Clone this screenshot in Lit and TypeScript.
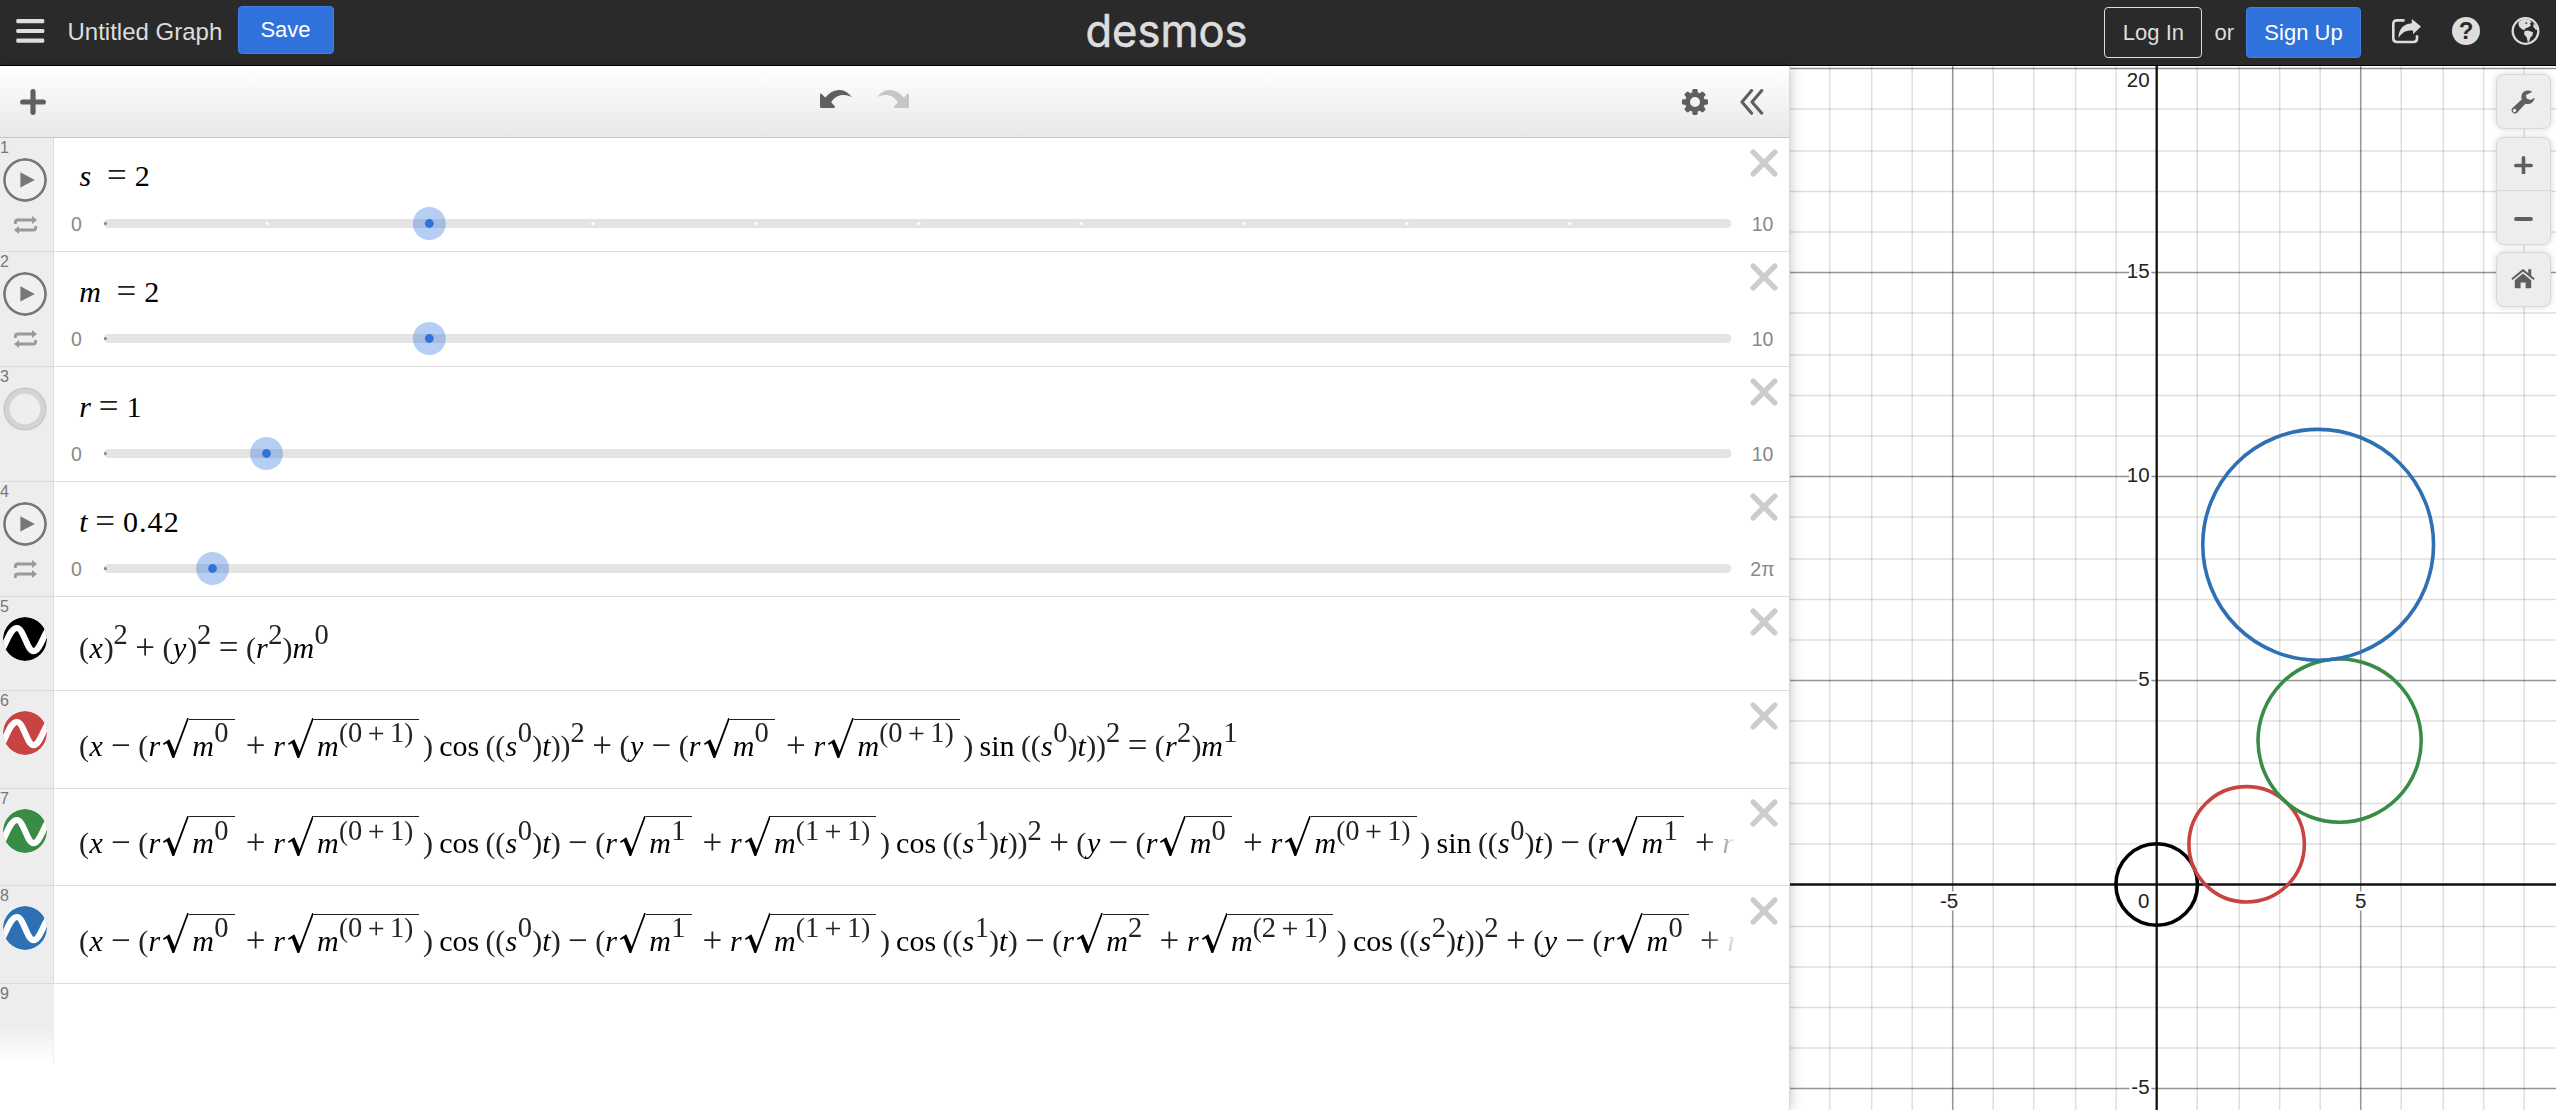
import { LitElement, html, svg, css, nothing, TemplateResult } from "lit";
import { customElement, property } from "lit/decorators.js";
import { classMap } from "lit/directives/class-map.js";

/* ---------- math typesetting ---------- */

// Grammar: letters, digits, operators, cos/sin, ^{...} for exponents, #{...} for square roots.
function readGroup(src: string, open: number): [string, number] {
  let depth = 0;
  for (let i = open; i < src.length; i++) {
    if (src[i] === "{") depth++;
    if (src[i] === "}" && --depth === 0) return [src.slice(open + 1, i), i + 1];
  }
  return [src.slice(open + 1), src.length];
}

function typeset(src: string): TemplateResult[] {
  const out: TemplateResult[] = [];
  let i = 0;
  while (i < src.length) {
    const ch = src[i];
    if (ch === "^" || ch === "#") {
      const [body, next] = readGroup(src, i + 1);
      out.push(
        ch === "^"
          ? html`<span class="sup">${typeset(body)}</span>`
          : html`<span class="root"><svg class="radical" viewBox="0 0 25.5 40"><path d="M0 25.4 L6.3 21.2 L11.6 33.6 L24.2 0 H25.5 V1.6 L11.2 40 H9.4 L3.9 25.2 L.7 27Z"/></svg><span class="radicand">${typeset(body)}</span></span>`
      );
      i = next;
      continue;
    }
    const fn = src.slice(i, i + 3);
    if (fn === "cos" || fn === "sin") {
      out.push(html`<span class="fn">${fn}</span>`);
      i += 3;
      continue;
    }
    if (/[a-z]/.test(ch)) out.push(html`<span class="t v v-${ch}">${ch}</span>`);
    else if (/[0-9]/.test(ch)) out.push(html`<span class="t d">${ch}</span>`);
    else if (ch === ".") out.push(html`<span class="t dot">.</span>`);
    else if (ch === "(" || ch === ")") out.push(html`<span class="t p">${ch}</span>`);
    else if (ch === "~") out.push(html`<span class="t ital"></span>`);
    else out.push(html`<span class="t o">${ch}</span>`);
    i++;
  }
  return out;
}

@customElement("math-line")
class MathLine extends LitElement {
  @property() src = "";
  static styles = css`
    :host { display: block; font: 30px/30px "Liberation Serif", "Times New Roman", serif; color: #000; white-space: nowrap; }
    .line { display: block; font-size: 30px; }
    .t { display: inline-block; text-align: center; line-height: 30px; }
    .v { font-style: italic; }
    .v-x, .v-y { width: 14.9px; }
    .v-r { width: 12.4px; }
    .v-m { width: 22px; }
    .v-s { width: 12.6px; }
    .v-t { width: 8.9px; }
    .p { width: 9.8px; color: #222; }
    .d { width: 16.2px; }
    .dot { width: 8.2px; }
    .ital { width: 8px; }
    .o { width: 34.6px; font-size: 35px; line-height: 0; color: #222; vertical-align: -1px; }
    .fn { padding: 0 6.4px; }
    .sup { font-size: 28.5px; line-height: 0; vertical-align: 13.4px; color: #222; }
    .sup .t { line-height: 0; }
    .sup .d { width: 14.4px; }
    .sup .p { width: 9px; font-size: 27px; }
    .sup .o { width: 27.6px; font-size: 30px; }
    .root { display: inline-block; margin: 0 3.5px 0 2.7px; }
    .radical { display: inline-block; width: 25.5px; height: 40px; vertical-align: -2.5px; }
    .radicand { display: inline-block; border-top: 1.5px solid #222; padding: 11px 6.2px 0 3.5px; }
  `;
  render() {
    return html`<span class="line">${typeset(this.src)}</span>`;
  }
}

/* ---------- expression rows ---------- */

interface Row {
  kind: "slider" | "plot" | "blank";
  src?: string;
  pos?: number;
  ticks?: boolean;
  max?: string;
  mode?: "play" | "idle";
  loop?: "both" | "forward";
  color?: string;
  short?: boolean;
}

const rows: Row[] = [
  { kind: "slider", src: "s~=2", pos: 0.2, ticks: true, max: "10", mode: "play", loop: "both" },
  { kind: "slider", src: "m~=2", pos: 0.2, max: "10", mode: "play", loop: "both" },
  { kind: "slider", src: "r=1", pos: 0.1, max: "10", mode: "idle" },
  { kind: "slider", src: "t=0.42", pos: 0.42 / (2 * Math.PI), max: "2π", mode: "play", loop: "forward" },
  { kind: "plot", src: "(x)^{2}+(y)^{2}=(r^{2})m^{0}", color: "#000000", short: true },
  {
    kind: "plot",
    src: "(x−(r#{m^{0}}+r#{m^{(0+1)}})cos((s^{0})t))^{2}+(y−(r#{m^{0}}+r#{m^{(0+1)}})sin((s^{0})t))^{2}=(r^{2})m^{1}",
    color: "#c74440",
  },
  {
    kind: "plot",
    src: "(x−(r#{m^{0}}+r#{m^{(0+1)}})cos((s^{0})t)−(r#{m^{1}}+r#{m^{(1+1)}})cos((s^{1})t))^{2}+(y−(r#{m^{0}}+r#{m^{(0+1)}})sin((s^{0})t)−(r#{m^{1}}+r",
    color: "#388c46",
  },
  {
    kind: "plot",
    src: "(x−(r#{m^{0}}+r#{m^{(0+1)}})cos((s^{0})t)−(r#{m^{1}}+r#{m^{(1+1)}})cos((s^{1})t)−(r#{m^{2}}+r#{m^{(2+1)}})cos((s^{2})t))^{2}+(y−(r#{m^{0}}+r",
    color: "#2d70b3",
  },
  { kind: "blank" },
];

@customElement("expression-row")
class ExpressionRow extends LitElement {
  @property({ attribute: false }) row!: Row;
  @property({ type: Number }) index = 0;
  static styles = css`
    :host { display: block; }
    .row { display: flex; box-sizing: border-box; width: 1789px; font-family: "Liberation Sans", Arial, sans-serif; border-bottom: 1px solid #dcdcdc; }
    .slider { height: 115px; }
    .first { height: 114px; }
    .plot { height: 97.5px; }
    .short { height: 94px; }
    .blank { height: 80px; border-bottom: 0; }
    .gutter { flex: none; box-sizing: border-box; width: 54px; background: #ededed; border-right: 1px solid #dcdcdc; display: flex; flex-direction: column; align-items: flex-start; color: #777; }
    .blank .gutter { background: linear-gradient(#ededed 50%, #fff); border-right-color: #eee; }
    .num { font-size: 16px; line-height: 18px; height: 20px; padding-top: 1px; box-sizing: border-box; }
    .badge { display: block; width: 44px; height: 44px; margin-left: 3px; border-radius: 50%; overflow: hidden; }
    .loop { display: block; width: 23px; height: 18px; margin: 14px 0 0 14px; }
    .body { flex: 1; min-width: 0; display: flex; flex-direction: column; }
    .clip { width: 1682px; box-sizing: border-box; padding-left: 25px; overflow: hidden; }
    .plot .clip { padding-top: 27px; padding-bottom: 10px; -webkit-mask-image: linear-gradient(90deg, #000 1650px, transparent 1682px); mask-image: linear-gradient(90deg, #000 1650px, transparent 1682px); }
    .plot.short .clip { padding-top: 35.5px; }
    .slider .clip { padding-top: 24.5px; padding-bottom: 15px; }
    .first .clip { padding-top: 23px; padding-bottom: 15.5px; }
    .track-row { display: flex; align-items: center; height: 33px; color: #888; font-size: 19.5px; line-height: 22px; }
    .min { flex: none; box-sizing: border-box; width: 49px; padding-left: 17px; padding-top: 2.5px; }
    .max { flex: none; box-sizing: border-box; width: 57px; text-align: center; padding: 2.5px 0 0 4px; }
    .track { display: block; width: 1629px; height: 33px; flex: none; }
    .del { flex: none; width: 28px; height: 28px; margin: 10.5px 11px 0 -39px; }
  `;

  private badge(r: Row) {
    if (r.kind === "blank") return nothing;
    if (r.mode === "play")
      return html`<svg class="badge" viewBox="0 0 44 44"><circle cx="22" cy="22" r="20.6" fill="#f0f0f0" stroke="#777" stroke-width="2.7"/><path d="M17.4 14.3 L31.8 22 L17.4 29.6Z" fill="#777"/></svg>`;
    if (r.mode === "idle")
      return html`<svg class="badge" viewBox="0 0 44 44"><circle cx="22" cy="22" r="21.6" fill="#c6c6c6"/><circle cx="22" cy="22" r="20.2" fill="#d4d4d4"/><circle cx="22" cy="22" r="15.3" fill="#eee"/></svg>`;
    return html`<svg class="badge" viewBox="0 0 44 44"><circle cx="22" cy="22" r="22" fill=${r.color}/><path d="M-1 33 C5 22 8 11 14 11 C20.5 11 24 34.2 30.5 34.2 C36 34.2 39 22 45 12.5" fill="none" stroke="#fff" stroke-width="6.2"/></svg>`;
  }

  private loopIcon(kind?: string) {
    if (!kind) return nothing;
    return html`<svg class="loop" viewBox="0 0 23 18" fill="none" stroke="#999" stroke-width="2.8">
      <path d="M1.4 8 V6 Q1.4 4 3.6 4 H19"/><path d="M18 0 L23 4 L18 8Z" fill="#999" stroke="none"/>
      ${kind === "both"
        ? svg`<path d="M21.6 10 V12 Q21.6 14 19.4 14 H4"/><path d="M5 10 L0 14 L5 18Z" fill="#999" stroke="none"/>`
        : svg`<path d="M1.4 18 V16 Q1.4 14 3.6 14 H19"/><path d="M18 10 L23 14 L18 18Z" fill="#999" stroke="none"/>`}
    </svg>`;
  }

  private track(r: Row) {
    const cx = 0.7 + 1628 * (r.pos ?? 0);
    const ticks = r.ticks ? [1, 3, 4, 5, 6, 7, 8, 9] : [];
    return html`<div class="track-row">
      <div class="min">0</div>
      <svg class="track" viewBox="0 0 1629 33">
        <rect x="1" y="12" width="1627.5" height="9" rx="4.5" fill="#e4e4e4"/>
        <circle cx="2.4" cy="16.5" r="1.6" fill="#888"/>
        ${ticks.map((k) => svg`<circle cx=${1.5 + 162.8 * k} cy="16.5" r="1.6" fill="#fff"/>`)}
        <circle cx=${cx} cy="16.5" r="16.5" fill="#2f72dc" fill-opacity=".35"/>
        <circle cx=${cx} cy="16.5" r="4.4" fill="#2f72dc"/>
      </svg>
      <div class="max">${r.max}</div>
    </div>`;
  }

  render() {
    const r = this.row;
    return html`<div class=${classMap({ row: true, [r.kind]: true, first: this.index === 1, short: !!r.short })}>
      <div class="gutter"><div class="num">${this.index}</div>${this.badge(r)}${this.loopIcon(r.loop)}</div>
      <div class="body">
        ${r.src ? html`<div class="clip"><math-line .src=${r.src}></math-line></div>` : nothing}
        ${r.kind === "slider" ? this.track(r) : nothing}
      </div>
      ${r.kind === "blank"
        ? nothing
        : html`<svg class="del" viewBox="0 0 28 28"><path d="M3.2 3.2 L24.8 24.8 M24.8 3.2 L3.2 24.8" stroke="#ccc" stroke-width="5.4" stroke-linecap="round"/></svg>`}
    </div>`;
  }
}

/* ---------- graph paper ---------- */

const OX = 2156.7, OY = 884.5, U = 40.8;
const gridX = (k: number) => OX + 1.5 * Math.floor(27.225 * k + 0.58);
const gridY = (k: number) => OY + 1.5 * Math.floor(27.21 * k + 0.79);

const T = 0.42;
const radii = [0, 1, 2, 3].map((n) => Math.sqrt(2 ** n));
const plotColors = ["#000000", "#c74440", "#388c46", "#2d70b3"];
const circles = radii.map((r, n) => {
  let x = 0, y = 0;
  for (let j = 0; j < n; j++) {
    const d = radii[j] + radii[j + 1];
    x += d * Math.cos(2 ** j * T);
    y += d * Math.sin(2 ** j * T);
  }
  return { x, y, r, color: plotColors[n] };
});

@customElement("graph-paper")
class GraphPaper extends LitElement {
  static styles = css`
    :host { display: block; position: relative; width: 766px; height: 1044px; background: #fff; }
    .paper { display: block; width: 766px; height: 1044px; }
    .label { font: 20.5px "Liberation Sans", Arial, sans-serif; fill: #222; stroke: #fff; stroke-width: 5px; paint-order: stroke; stroke-linejoin: round; }
    .tools { position: absolute; top: 8px; right: 5.5px; display: flex; flex-direction: column; gap: 8px; }
    .group { box-sizing: border-box; width: 55px; background: #ededed; border: 1px solid #d8d8d8; border-radius: 8px; box-shadow: 0 0 6px rgba(0, 0, 0, 0.16); }
    .tool { display: flex; align-items: center; justify-content: center; height: 53px; box-sizing: border-box; }
    .tool.in { border-bottom: 1px solid #d8d8d8; }
    .home { margin-top: -1px; }
    .home .tool { padding-bottom: 1px; }
    .tool svg { display: block; }
  `;
  render() {
    const xs = Array.from({ length: 18 }, (_, i) => i - 8);
    const ys = Array.from({ length: 26 }, (_, i) => i - 20);
    return html`
      <svg class="paper" viewBox="1790 66 766 1044">
        ${[false, true].map((major) => [
          ...xs.filter((k) => k !== 0 && (k % 5 === 0) === major).map((k) => svg`<line x1=${gridX(k)} x2=${gridX(k)} y1="66" y2="1110" stroke="#000" stroke-opacity=${major ? 0.42 : 0.13} stroke-width="1.5"/>`),
          ...ys.filter((k) => k !== 0 && (k % 5 === 0) === major).map((k) => svg`<line x1="1790" x2="2556" y1=${gridY(k)} y2=${gridY(k)} stroke="#000" stroke-opacity=${major ? 0.42 : 0.13} stroke-width="1.5"/>`),
        ])}
        <line x1=${OX} x2=${OX} y1="66" y2="1110" stroke="#111" stroke-width="2.3"/>
        <line x1="1790" x2="2556" y1=${OY} y2=${OY} stroke="#111" stroke-width="2.3"/>
        ${[20, 15, 10, 5, -5].map((v) => svg`<text class="label" text-anchor="end" x="2149.6" y=${v === 20 ? 87.3 : OY - U * v + 5.3}>${v}</text>`)}
        <text class="label" text-anchor="middle" x="1949" y="907.7">-5</text>
        <text class="label" text-anchor="end" x="2149.4" y="907.7">0</text>
        <text class="label" text-anchor="middle" x="2360.6" y="907.7">5</text>
        ${circles.map((c) => svg`<circle cx=${OX + c.x * U} cy=${OY - c.y * U} r=${c.r * U} fill="none" stroke=${c.color} stroke-width="3.6"/>`)}
      </svg>
      <div class="tools">
        <div class="group"><div class="tool">
          <svg width="24" height="24" viewBox="0 0 24 24"><path fill="#5f5f5f" fill-rule="evenodd" d="M21.2 1.9 C17.5 -.6 12 .6 10.6 5 C10.2 6.6 10.3 8 10.7 9.4 L1.2 18.2 A3.4 3.4 0 0 0 5.8 23 L14.4 13.8 C18.6 15 23 12.5 23.6 7.7 L19.4 10 L15.6 8.6 L15 4.9Z M3.6 18.8 A1.7 1.7 0 1 1 3.5 18.8Z"/></svg>
        </div></div>
        <div class="group">
          <div class="tool in"><svg width="19" height="19" viewBox="0 0 19 19"><path d="M9.5 2.8V18.2M1.8 10.5H17.2" stroke="#5f5f5f" stroke-width="3.6" stroke-linecap="round"/></svg></div>
          <div class="tool"><svg width="19" height="19" viewBox="0 0 19 19"><path d="M2 11H17" stroke="#5f5f5f" stroke-width="3.8" stroke-linecap="round"/></svg></div>
        </div>
        <div class="group home"><div class="tool">
          <svg width="24" height="20" viewBox="0 0 24 20"><path d="M.9 10.2 L12 1.2 L23.1 10.2" fill="none" stroke="#5f5f5f" stroke-width="2.1"/><path d="M17.2 .2 H20.2 V7.2 L17.2 4.8Z" fill="#5f5f5f"/><path d="M12 4.6 L20.2 11.3 V18.2 Q20.2 19.2 19.2 19.2 H14.6 V13.6 H9.6 V19.2 H4.8 Q3.8 19.2 3.8 18.2 V11.3Z" fill="#5f5f5f"/></svg>
        </div></div>
      </div>`;
  }
}

/* ---------- page ---------- */

@customElement("app-root")
class AppRoot extends LitElement {
  static styles = css`
    :host { display: block; width: 2556px; height: 1110px; overflow: hidden; background: #fff; font-family: "Liberation Sans", Arial, sans-serif; }
    .header { display: flex; box-sizing: border-box; height: 66px; background: #2a2a2a; border-bottom: 1.5px solid #000; color: #ddd; align-items: flex-start; font-size: 22px; }
    .left { display: flex; width: 1084px; align-items: flex-start; }
    .burger { display: block; margin: 19px 0 0 16px; }
    .title { margin: 18px 0 0 22.5px; font-size: 24px; line-height: 28px; width: 168px; white-space: nowrap; }
    .btn { box-sizing: border-box; border-radius: 4px; text-align: center; white-space: nowrap; }
    .blue { background: #2f72dc; border: 1px solid #4080e8; color: #fff; }
    .save { width: 96px; height: 48px; line-height: 46px; margin: 6px 0 0 2px; }
    .logo { height: 64px; width: 170px; display: block; overflow: visible; }
    .right { display: flex; align-items: flex-start; margin-left: auto; }
    .login { width: 98px; height: 51px; line-height: 49px; margin-top: 7px; border: 1.4px solid #ddd; }
    .or { line-height: 25px; margin: 19.5px 12px 0; }
    .signup { width: 115px; height: 51px; line-height: 49px; margin-top: 7px; }
    .share { display: block; margin: 19px 0 0 30.5px; }
    .help { display: block; margin: 17px 0 0 31px; }
    .globe { display: block; margin: 17px 16px 0 31.5px; }
    .qmark { font: bold 24px "Liberation Sans", Arial, sans-serif; fill: #2a2a2a; }
    .wordmark { font: 45px Inter, "Open Sans", sans-serif; fill: #ddd; stroke: #ddd; stroke-width: 0.6px; stroke-linejoin: round; }
    .main { display: flex; height: 1044px; }
    .panel { box-sizing: border-box; width: 1790px; flex: none; background: #fff; border-right: 1px solid #d9d9d9; box-shadow: 0 0 12px rgba(0, 0, 0, 0.25); z-index: 1; }
    .toolbar { display: flex; align-items: flex-start; box-sizing: border-box; height: 72px; border-bottom: 1.5px solid #c6c6c6; background: linear-gradient(#fff, #e8e8e8); }
    .toolbar svg { display: block; flex: none; }
    .add { margin: 23px 0 0 20px; }
    .undo { margin: 24px 0 0 774px; }
    .redo { margin: 24px 0 0 25px; }
    .gear { margin: 23px 0 0 773px; }
    .hide { margin: 23px 0 0 32px; }
  `;

  render() {
    const teeth = [0, 45, 90, 135, 180, 225, 270, 315];
    return html`
      <div class="header">
        <div class="left">
          <svg class="burger" width="29" height="24" viewBox="0 0 29 24" fill="#ddd"><rect x=".3" width="28" height="4.3" rx="1.4"/><rect x=".3" y="9.9" width="28" height="4.2" rx="1.4"/><rect x=".3" y="19.6" width="28" height="4.2" rx="1.4"/></svg>
          <div class="title">Untitled Graph</div>
          <div class="btn blue save">Save</div>
        </div>
        <svg class="logo" viewBox="0 0 170 64"><text class="wordmark" x="1.5" y="47.4" textLength="162" lengthAdjust="spacingAndGlyphs">desmos</text></svg>
        <div class="right">
          <div class="btn login">Log In</div>
          <div class="or">or</div>
          <div class="btn blue signup">Sign Up</div>
          <svg class="share" width="29" height="25" viewBox="0 0 29 25"><path d="M12.5 1.4 H5 Q1.3 1.4 1.3 5 V19.6 Q1.3 23 5 23 H21.5 Q25 23 25 19.6 V16.2" fill="none" stroke="#ddd" stroke-width="2.6"/><path d="M19.8 0 L29 7.6 L21 15.2 V11.6 C13.6 11.2 10 13.6 6.4 19.2 C6.6 9.6 11.6 4.8 19.8 4.2Z" fill="#ddd"/></svg>
          <svg class="help" width="28" height="28" viewBox="0 0 28 28"><circle cx="14" cy="14" r="14" fill="#ddd"/><text class="qmark" x="14" y="22.4" text-anchor="middle">?</text></svg>
          <svg class="globe" width="29" height="28" viewBox="0 0 29 28"><circle cx="14.5" cy="14" r="12.8" fill="none" stroke="#ddd" stroke-width="2.3"/><path fill="#ddd" d="M8 4.4 L12 2 L18.6 2.6 L20.6 5.4 L18.8 6.4 L20 8.4 L17 10.4 L14.4 11.2 L14 13 L11.4 12.6 L8.4 10 L7.4 7Z M13.4 14.2 L17 13.4 L22 15.2 L21.4 18.4 L19.4 20.4 L18.2 24.2 L16.8 25.4 L15.8 20.4 L13.2 17.4Z M22.8 6.2 L25.4 9.2 L26.6 13 L24.4 12.6 L22.2 9.6Z"/><path d="M13.6 6.6 L15.6 5 L16.6 6.8Z" fill="#2a2a2a"/></svg>
        </div>
      </div>
      <div class="main">
        <div class="panel">
          <div class="toolbar">
            <svg class="add" width="26" height="26" viewBox="0 0 26 26"><path d="M13 2.7V23.3M2.7 13H23.3" stroke="#5f5f5f" stroke-width="5.2" stroke-linecap="round"/></svg>
            <svg class="undo" width="32" height="19" viewBox="0 0 32 19"><path fill="#5f5f5f" d="M0 4.4 Q.3 3 1.6 4 L5.2 7.6 C13.5 -2.4 24.5 -2.6 32 7.2 C24 3.4 16.2 4.4 11.2 12.2 L14.6 16 Q15.6 17.8 13.6 18 H1.6 Q0 18 0 16.4Z"/></svg>
            <svg class="redo" width="32" height="19" viewBox="0 0 32 19"><path fill="#c6c6c6" d="M32 4.4 Q31.7 3 30.4 4 L26.8 7.6 C18.5 -2.4 7.5 -2.6 0 7.2 C8 3.4 15.8 4.4 20.8 12.2 L17.4 16 Q16.4 17.8 18.4 18 H30.4 Q32 18 32 16.4Z"/></svg>
            <svg class="gear" width="26" height="26" viewBox="0 0 26 26">${teeth.map((a) => svg`<rect x="10.3" y="0" width="5.4" height="7" rx="1.4" fill="#5f5f5f" transform="rotate(${a} 13 13)"/>`)}<circle cx="13" cy="13" r="7.5" fill="none" stroke="#5f5f5f" stroke-width="5"/></svg>
            <svg class="hide" width="25" height="26" viewBox="0 0 25 26"><path d="M11.6 1.6 L2 13 L11.6 24.2 M21.8 1.6 L12 13 L21.8 24.2" fill="none" stroke="#5f5f5f" stroke-width="3.1" stroke-linecap="round" stroke-linejoin="round"/></svg>
          </div>
          <div class="list">${rows.map((r, i) => html`<expression-row .row=${r} .index=${i + 1}></expression-row>`)}</div>
        </div>
        <graph-paper></graph-paper>
      </div>`;
  }
}
